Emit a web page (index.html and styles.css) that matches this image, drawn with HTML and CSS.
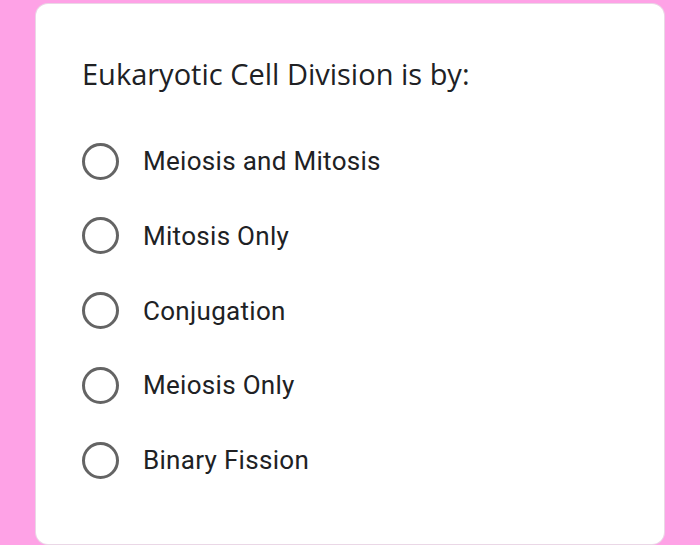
FILE: index.html
```html
<!DOCTYPE html>
<html>
<head>
<meta charset="utf-8">
<link rel="stylesheet" href="styles.css">
</head>
<body>
<div class="card">
  <h1 class="title">Eukaryotic Cell Division is by:</h1>
  <ul class="options">
    <li class="option"><span class="radio"></span><span class="label">Meiosis and Mitosis</span></li>
    <li class="option"><span class="radio"></span><span class="label">Mitosis Only</span></li>
    <li class="option"><span class="radio"></span><span class="label">Conjugation</span></li>
    <li class="option"><span class="radio"></span><span class="label">Meiosis Only</span></li>
    <li class="option"><span class="radio"></span><span class="label">Binary Fission</span></li>
  </ul>
</div>
</body>
</html>
```

FILE: styles.css
```css
html, body {
  margin: 0;
  padding: 0;
  background: #fea2e6;
  width: 700px;
  height: 545px;
  overflow: hidden;
}
body {
  padding: 4px 36px 0 36px;
  box-sizing: border-box;
}
.card {
  background: #ffffff;
  height: 540px;
  border-radius: 12px;
  box-shadow: 0 0 0 1px #ead7e6;
  padding: 50px 0 0 46px;
  box-sizing: border-box;
}
.title {
  margin: 0;
  font-family: "Open Sans", sans-serif;
  font-weight: 400;
  font-size: 29px;
  line-height: 40px;
  color: #202124;
}
.options {
  list-style: none;
  margin: 49px 0 0 0;
  padding: 0;
  display: flex;
  flex-direction: column;
  gap: 38.8px;
}
.option {
  display: flex;
  align-items: center;
  height: 36px;
}
.radio {
  width: 37px;
  height: 37px;
  box-sizing: border-box;
  border: 3px solid #646464;
  border-radius: 50%;
  flex: none;
}
.label {
  margin-left: 24px;
  font-family: Roboto, sans-serif;
  font-size: 26px;
  letter-spacing: 0.3px;
  color: #202124;
}
```
